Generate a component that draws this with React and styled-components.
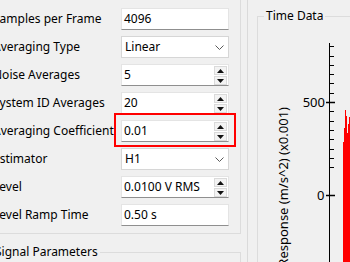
import React from 'react';
import styled, { createGlobalStyle } from 'styled-components';

const Global = createGlobalStyle`
  html, body { margin: 0; padding: 0; background: #f0f0f0; }
  body {
    font-family: "Noto Sans", "Liberation Sans", sans-serif;
    font-size: 12px;
    color: #000;
  }
  #root { width: 350px; height: 262px; }
`;

const Window = styled.div`
  width: 350px;
  height: 262px;
  overflow: hidden;
  display: flex;
  align-items: flex-start;
  background: #f0f0f0;
`;

const LeftColumn = styled.div`
  flex: none;
  width: 253px;
  margin-left: -12px;
  display: flex;
  flex-direction: column;
`;

const ParamsBox = styled.div`
  margin-top: -12px;
  border: 1px solid #dcdcdc;
  padding: 19px 11px 7px 4px;
`;

const Form = styled.div`
  display: grid;
  grid-template-columns: 128px 108px;
  grid-auto-rows: 22px;
  row-gap: 6px;
  align-items: center;
`;

const Label = styled.div`
  white-space: nowrap;
  line-height: 16px;
`;

const FieldCell = styled.div`
  position: relative;
  height: 22px;
`;

const Highlight = styled.div`
  position: absolute;
  left: -7px;
  right: -7px;
  top: -7px;
  bottom: -5px;
  border: 2px solid #ff0000;
  pointer-events: none;
`;

const LineEdit = styled.div`
  box-sizing: border-box;
  height: 22px;
  background: #fff;
  border: 1px solid #e4e4e4;
  border-bottom-color: #8f8f8f;
  padding-left: 2px;
  display: flex;
  align-items: center;
  line-height: 16px;
  white-space: nowrap;
`;

const Combo = styled.div`
  box-sizing: border-box;
  height: 22px;
  background: #fff;
  border: 1px solid #d6d6d6;
  padding: 0 4px 0 3px;
  display: flex;
  align-items: center;
  justify-content: space-between;
  line-height: 16px;
`;

const Spin = styled.div`
  box-sizing: border-box;
  height: 22px;
  background: #fff;
  border: 1px solid #e4e4e4;
  border-bottom-color: #8f8f8f;
  display: flex;
  align-items: stretch;
`;

const SpinText = styled.div`
  flex: 1;
  padding-left: 2px;
  display: flex;
  align-items: center;
  white-space: nowrap;
  line-height: 16px;
`;

const SpinButtons = styled.div`
  width: 13px;
  margin: 1px 1px 0 0;
  display: flex;
  flex-direction: column;
  gap: 1px;
`;

const SpinButton = styled.div`
  flex: 1;
  background: #f3f3f3;
  border: 1px solid #dadada;
  display: flex;
  align-items: center;
  justify-content: center;
`;

const SignalBox = styled.fieldset`
  margin: 10px 0 0 -2px;
  padding: 0;
  min-inline-size: 0;
  border: 1px solid #dcdcdc;
  height: 40px;
`;

const Legend = styled.legend`
  margin-left: 6px;
  padding: 0 2px;
  line-height: 16px;
  font-size: 12px;
  white-space: nowrap;
`;

const Splitter = styled.div`
  flex: none;
  width: 1px;
  height: 262px;
  margin-left: 6px;
  background: #dadada;
`;

const TimeBox = styled.fieldset`
  flex: none;
  margin: 8px 0 0 9px;
  padding: 0;
  min-inline-size: 0;
  width: 140px;
  height: 300px;
  border: 1px solid #dcdcdc;
`;

const ChartSvg = styled.svg`
  display: block;
  overflow: visible;
`;

const Chevron = () => (
  <svg width="9" height="5" viewBox="0 0 9 5">
    <polyline points="0.5,0.5 4.5,4.5 8.5,0.5" fill="none" stroke="#5a5a5a" strokeWidth="1" />
  </svg>
);

const Arrow = ({ down }) => (
  <svg width="7" height="4" viewBox="0 0 7 4">
    <polygon points={down ? '0,0 7,0 3.5,4' : '0,4 7,4 3.5,0'} fill="#111" />
  </svg>
);

const rows = [
  { label: 'Samples per Frame', kind: 'line', value: '4096' },
  { label: 'Averaging Type', kind: 'combo', value: 'Linear' },
  { label: 'Noise Averages', kind: 'spin', value: '5' },
  { label: 'System ID Averages', kind: 'spin', value: '20' },
  { label: 'Averaging Coefficient', kind: 'spin', value: '0.01', highlight: true },
  { label: 'Estimator', kind: 'combo', value: 'H1' },
  { label: 'Level', kind: 'spin', value: '0.0100 V RMS' },
  { label: 'Level Ramp Time', kind: 'line', value: '0.50 s' },
];

function Field({ kind, value }) {
  if (kind === 'combo') {
    return (
      <Combo>
        <span>{value}</span>
        <Chevron />
      </Combo>
    );
  }
  if (kind === 'spin') {
    return (
      <Spin>
        <SpinText>{value}</SpinText>
        <SpinButtons>
          <SpinButton><Arrow /></SpinButton>
          <SpinButton><Arrow down /></SpinButton>
        </SpinButtons>
      </Spin>
    );
  }
  return <LineEdit>{value}</LineEdit>;
}

function Chart() {
  // origin at page (258, 24)
  const minor = [];
  for (let k = -8; k <= 7; k++) {
    const y = 78 + k * 9.3;
    if (y > 20 && y < 240) minor.push(y);
  }
  const signal = [
    [85.5, 118], [86.5, 104], [87.5, 86], [88.5, 92], [89.5, 109], [90.5, 100], [91.5, 93], [92.5, 98],
  ];
  return (
    <ChartSvg width="100" height="240" viewBox="0 0 100 240">
      <line x1="71.5" y1="19" x2="71.5" y2="240" stroke="#000" strokeWidth="1" />
      {minor.map((y, i) => (
        <line key={i} x1="72" y1={Math.round(y) + 0.5} x2="76" y2={Math.round(y) + 0.5} stroke="#000" strokeWidth="1" />
      ))}
      <line x1="68" y1="78.5" x2="77" y2="78.5" stroke="#000" strokeWidth="1.5" />
      <line x1="68" y1="171.5" x2="77" y2="171.5" stroke="#000" strokeWidth="1.5" />
      <text x="67" y="82.5" textAnchor="end" fontFamily='"Noto Sans", sans-serif' fontSize="13" fill="#000">500</text>
      <text x="66.5" y="175.5" textAnchor="end" fontFamily='"Noto Sans", sans-serif' fontSize="13" fill="#000">0</text>
      <text
        transform="translate(30 83) rotate(-90)"
        textAnchor="end"
        fontFamily='"Noto Sans", sans-serif'
        fontSize="13"
        fill="#000"
      >
        Response (m/s^2) (x0.001)
      </text>
      {signal.map(([x, y], i) => (
        <line key={i} x1={x} y1={y} x2={x} y2="240" stroke="#ff0000" strokeWidth="1" />
      ))}
    </ChartSvg>
  );
}

export default function App() {
  return (
    <>
      <Global />
      <Window>
        <LeftColumn>
          <ParamsBox>
            <Form>
              {rows.map((r) => (
                <React.Fragment key={r.label}>
                  <Label>{r.label}</Label>
                  <FieldCell>
                    <Field kind={r.kind} value={r.value} />
                    {r.highlight && <Highlight />}
                  </FieldCell>
                </React.Fragment>
              ))}
            </Form>
          </ParamsBox>
          <SignalBox>
            <Legend>Signal Parameters</Legend>
          </SignalBox>
        </LeftColumn>
        <Splitter />
        <TimeBox>
          <Legend>Time Data</Legend>
          <Chart />
        </TimeBox>
      </Window>
    </>
  );
}
